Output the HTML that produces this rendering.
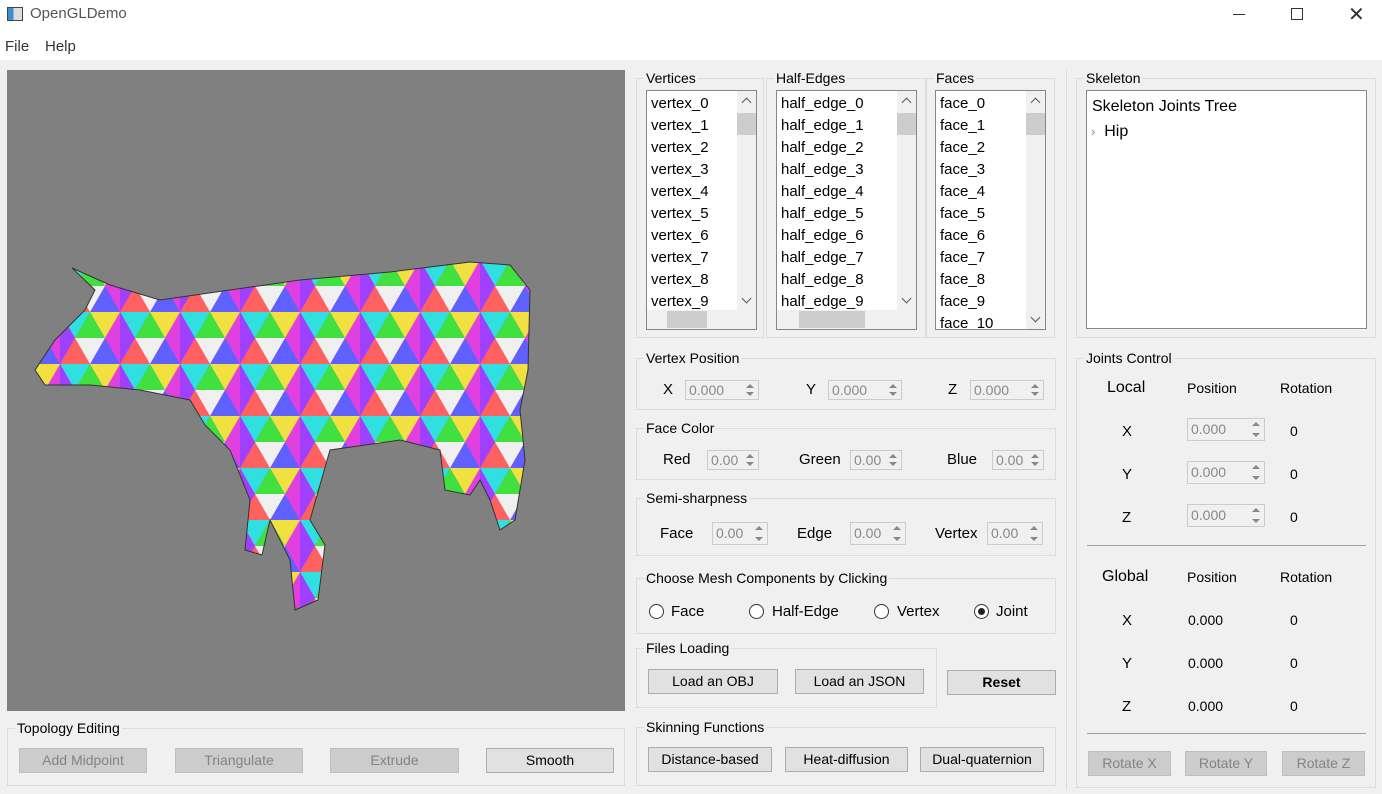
<!DOCTYPE html><html><head><style>
*{box-sizing:border-box;margin:0;padding:0}
body{width:1382px;height:794px;background:#f0f0f0;font-family:"Liberation Sans",sans-serif;font-size:14px;color:#000;position:relative;overflow:hidden}
.a{position:absolute}
.gb{position:absolute;border:1px solid #dcdcdc}
.gt{position:absolute;background:#f0f0f0;padding:0 2px;font-size:14px;top:-10px;left:7px;line-height:18px}
.list{position:absolute;background:#fff;border:1px solid #828790;overflow:hidden;padding-top:2px}
.list>div{height:22px;line-height:22px;padding-left:4px;font-size:15px}
.list>.vs{position:absolute;right:0;top:0;width:19px;bottom:19px;height:auto;padding:0;background:#f0f0f0}
.list>.hs{position:absolute;left:0;right:0;bottom:0;height:19px;padding:0;background:#f0f0f0}
.up,.dn{position:absolute;left:6px;width:7px;height:7px;border-left:1.5px solid #555;border-top:1.5px solid #555}
.up{top:8px;transform:rotate(45deg)}
.dn{bottom:8px;transform:rotate(225deg)}
.spin{position:absolute;height:20px;border:1px solid #ccc;background:#f0f0f0;color:#888;font-size:14px;line-height:18px;padding-left:3px}
.spin:before{content:"";position:absolute;right:4px;top:3px;border:4px solid transparent;border-bottom:4px solid #888;border-top:0}
.spin:after{content:"";position:absolute;right:4px;bottom:3px;border:4px solid transparent;border-top:4px solid #888;border-bottom:0}
.btn{position:absolute;height:25px;border:1px solid #adadad;background:#e1e1e1;text-align:center;line-height:23px;font-size:14px}
.dis{color:#838383;border-color:#bfbfbf;background:#ccc}
.rb{position:absolute;width:15px;height:15px;border:1px solid #333;border-radius:50%;background:#fff}
</style></head><body>
<div class="a" style="left:0;top:0;width:1382px;height:30px;background:#fff"></div>
<div class="a" style="left:7px;top:7px;width:16px;height:14px;border:1px solid #444;background:linear-gradient(90deg,#3a8fd0 40%,#ddd 40%)"></div>
<div class="a" style="left:30px;top:5px;font-size:15px;color:#555">OpenGLDemo</div>
<div class="a" style="left:1233px;top:14px;width:12px;height:1px;background:#333"></div>
<div class="a" style="left:1291px;top:8px;width:12px;height:12px;border:1px solid #333"></div>
<div class="a" style="left:1348px;top:2px;font-size:20px;color:#333">✕</div>
<div class="a" style="left:0;top:30px;width:1382px;height:30px;background:#fff"></div>
<div class="a" style="left:5px;top:38px;font-size:15px;color:#333">File</div>
<div class="a" style="left:45px;top:38px;font-size:15px;color:#333">Help</div>
<div class="a" style="left:7px;top:70px;width:618px;height:641px;background:#808080">
<svg width="618" height="641" viewBox="7 70 618 641">
<defs><pattern id="p" width="60" height="52" patternUnits="userSpaceOnUse">
<rect width="60" height="52" fill="#e040e0"/>
<polygon points="0,0 30,0 15,26" fill="#30e0e0"/><polygon points="30,0 60,0 45,26" fill="#f0e040"/>
<polygon points="15,26 45,26 30,0" fill="#40e040"/><polygon points="0,52 15,26 30,52" fill="#ff6060"/>
<polygon points="30,52 45,26 60,52" fill="#6060ff"/><polygon points="15,26 45,26 30,52" fill="#f0f0f0"/>
<polygon points="0,0 15,26 0,52" fill="#a040ff"/></pattern></defs>
<polygon fill="url(#p)" stroke="#333" stroke-width="1" points="72,268 110,285 160,300 230,290 300,280 390,272 470,262 510,265 530,290 528,370 520,410 525,460 515,520 500,530 490,500 480,480 470,495 445,490 440,450 400,440 330,450 310,520 325,545 318,600 295,610 290,560 270,520 262,555 245,550 250,500 230,450 205,425 190,400 140,390 90,385 45,385 35,370 55,340 85,310 95,290"/>
</svg></div>
<div class="gb" style="left:7px;top:728px;width:618px;height:58px"><span class="gt">Topology Editing</span></div>
<div class="btn dis" style="left:19px;top:748px;width:128px">Add Midpoint</div>
<div class="btn dis" style="left:175px;top:748px;width:128px">Triangulate</div>
<div class="btn dis" style="left:330px;top:748px;width:129px">Extrude</div>
<div class="btn" style="left:486px;top:748px;width:128px">Smooth</div>
<div class="gb" style="left:636px;top:78px;width:128px;height:260px"><span class="gt">Vertices</span></div>
<div class="gb" style="left:766px;top:78px;width:160px;height:260px"><span class="gt">Half-Edges</span></div>
<div class="gb" style="left:926px;top:78px;width:129px;height:260px"><span class="gt">Faces</span></div>
<div class="list" style="left:646px;top:90px;width:111px;height:240px"><div>vertex_0</div><div>vertex_1</div><div>vertex_2</div><div>vertex_3</div><div>vertex_4</div><div>vertex_5</div><div>vertex_6</div><div>vertex_7</div><div>vertex_8</div><div>vertex_9</div>
<div class="vs"><div class="a" style="left:0;top:22px;width:19px;height:22px;background:#cdcdcd"></div><i class="up"></i><i class="dn"></i></div><div class="hs"><div class="a" style="left:20px;top:1px;width:40px;height:17px;background:#cdcdcd"></div></div></div>
<div class="list" style="left:776px;top:90px;width:141px;height:240px"><div>half_edge_0</div><div>half_edge_1</div><div>half_edge_2</div><div>half_edge_3</div><div>half_edge_4</div><div>half_edge_5</div><div>half_edge_6</div><div>half_edge_7</div><div>half_edge_8</div><div>half_edge_9</div>
<div class="vs"><div class="a" style="left:0;top:22px;width:19px;height:22px;background:#cdcdcd"></div><i class="up"></i><i class="dn"></i></div><div class="hs"><div class="a" style="left:22px;top:1px;width:66px;height:17px;background:#cdcdcd"></div></div></div>
<div class="list" style="left:935px;top:90px;width:111px;height:240px"><div>face_0</div><div>face_1</div><div>face_2</div><div>face_3</div><div>face_4</div><div>face_5</div><div>face_6</div><div>face_7</div><div>face_8</div><div>face_9</div><div>face_10</div>
<div class="vs" style="bottom:0"><div class="a" style="left:0;top:22px;width:19px;height:22px;background:#cdcdcd"></div><i class="up"></i><i class="dn"></i></div></div>
<div class="gb" style="left:636px;top:358px;width:420px;height:52px"><span class="gt">Vertex Position</span></div>
<div class="a" style="left:663px;top:381px;font-size:15px">X</div><div class="spin" style="left:685px;top:380px;width:74px">0.000</div>
<div class="a" style="left:806px;top:381px;font-size:15px">Y</div><div class="spin" style="left:828px;top:380px;width:74px">0.000</div>
<div class="a" style="left:948px;top:381px;font-size:15px">Z</div><div class="spin" style="left:970px;top:380px;width:74px">0.000</div>
<div class="gb" style="left:636px;top:428px;width:420px;height:52px"><span class="gt">Face Color</span></div>
<div class="a" style="left:663px;top:451px;font-size:15px">Red</div><div class="spin" style="left:707px;top:450px;width:52px">0.00</div>
<div class="a" style="left:799px;top:451px;font-size:15px">Green</div><div class="spin" style="left:850px;top:450px;width:52px">0.00</div>
<div class="a" style="left:947px;top:451px;font-size:15px">Blue</div><div class="spin" style="left:992px;top:450px;width:52px">0.00</div>
<div class="gb" style="left:636px;top:498px;width:420px;height:58px"><span class="gt">Semi-sharpness</span></div>
<div class="a" style="left:660px;top:525px;font-size:15px">Face</div><div class="spin" style="left:712px;top:522px;width:56px;height:23px;line-height:21px">0.00</div>
<div class="a" style="left:797px;top:525px;font-size:15px">Edge</div><div class="spin" style="left:850px;top:522px;width:56px;height:23px;line-height:21px">0.00</div>
<div class="a" style="left:935px;top:525px;font-size:15px">Vertex</div><div class="spin" style="left:987px;top:522px;width:56px;height:23px;line-height:21px">0.00</div>
<div class="gb" style="left:636px;top:578px;width:420px;height:56px"><span class="gt">Choose Mesh Components by Clicking</span></div>
<div class="rb" style="left:649px;top:604px"></div><div class="a" style="left:671px;top:603px;font-size:15px">Face</div>
<div class="rb" style="left:749px;top:604px"></div><div class="a" style="left:772px;top:603px;font-size:15px">Half-Edge</div>
<div class="rb" style="left:874px;top:604px"></div><div class="a" style="left:897px;top:603px;font-size:15px">Vertex</div>
<div class="rb" style="left:974px;top:604px"><div class="a" style="left:3px;top:3px;width:7px;height:7px;border-radius:50%;background:#222"></div></div><div class="a" style="left:996px;top:603px;font-size:15px">Joint</div>
<div class="gb" style="left:636px;top:648px;width:301px;height:60px"><span class="gt">Files Loading</span></div>
<div class="btn" style="left:648px;top:669px;width:130px">Load an OBJ</div>
<div class="btn" style="left:795px;top:669px;width:129px">Load an JSON</div>
<div class="btn" style="left:947px;top:670px;width:109px;font-weight:bold">Reset</div>
<div class="gb" style="left:636px;top:727px;width:420px;height:59px"><span class="gt">Skinning Functions</span></div>
<div class="btn" style="left:648px;top:747px;width:124px">Distance-based</div>
<div class="btn" style="left:785px;top:747px;width:123px">Heat-diffusion</div>
<div class="btn" style="left:920px;top:747px;width:124px">Dual-quaternion</div>
<div class="a" style="left:1066px;top:70px;width:1px;height:720px;background:#dcdcdc"></div>
<div class="gb" style="left:1076px;top:78px;width:300px;height:260px"><span class="gt">Skeleton</span></div>
<div class="list" style="left:1086px;top:90px;width:281px;height:239px;font-size:16px"><div style="padding-left:5px;font-size:16px;height:26px;line-height:28px">Skeleton Joints Tree</div><div style="padding-left:4px;font-size:16px;height:26px;line-height:26px"><span style="color:#888;font-size:13px">›</span>&nbsp; Hip</div></div>
<div class="gb" style="left:1076px;top:358px;width:300px;height:430px"><span class="gt">Joints Control</span></div>
<div class="a" style="left:1107px;top:379px;font-size:16px">Local</div><div class="a" style="left:1187px;top:380px">Position</div><div class="a" style="left:1280px;top:380px">Rotation</div>
<div class="a" style="left:1122px;top:423px;font-size:15px">X</div><div class="spin" style="left:1187px;top:418px;width:78px;height:23px;line-height:21px">0.000</div><div class="a" style="left:1290px;top:423px">0</div>
<div class="a" style="left:1122px;top:466px;font-size:15px">Y</div><div class="spin" style="left:1187px;top:461px;width:78px;height:23px;line-height:21px">0.000</div><div class="a" style="left:1290px;top:466px">0</div>
<div class="a" style="left:1122px;top:509px;font-size:15px">Z</div><div class="spin" style="left:1187px;top:504px;width:78px;height:23px;line-height:21px">0.000</div><div class="a" style="left:1290px;top:509px">0</div>
<div class="a" style="left:1087px;top:545px;width:279px;height:1px;background:#a0a0a0"></div>
<div class="a" style="left:1102px;top:568px;font-size:16px">Global</div><div class="a" style="left:1187px;top:569px">Position</div><div class="a" style="left:1280px;top:569px">Rotation</div>
<div class="a" style="left:1122px;top:612px;font-size:15px">X</div><div class="a" style="left:1188px;top:612px">0.000</div><div class="a" style="left:1290px;top:612px">0</div>
<div class="a" style="left:1122px;top:655px;font-size:15px">Y</div><div class="a" style="left:1188px;top:655px">0.000</div><div class="a" style="left:1290px;top:655px">0</div>
<div class="a" style="left:1122px;top:698px;font-size:15px">Z</div><div class="a" style="left:1188px;top:698px">0.000</div><div class="a" style="left:1290px;top:698px">0</div>
<div class="a" style="left:1087px;top:733px;width:279px;height:1px;background:#a0a0a0"></div>
<div class="btn dis" style="left:1088px;top:751px;width:83px">Rotate X</div>
<div class="btn dis" style="left:1185px;top:751px;width:82px">Rotate Y</div>
<div class="btn dis" style="left:1282px;top:751px;width:83px">Rotate Z</div>
</body></html>
